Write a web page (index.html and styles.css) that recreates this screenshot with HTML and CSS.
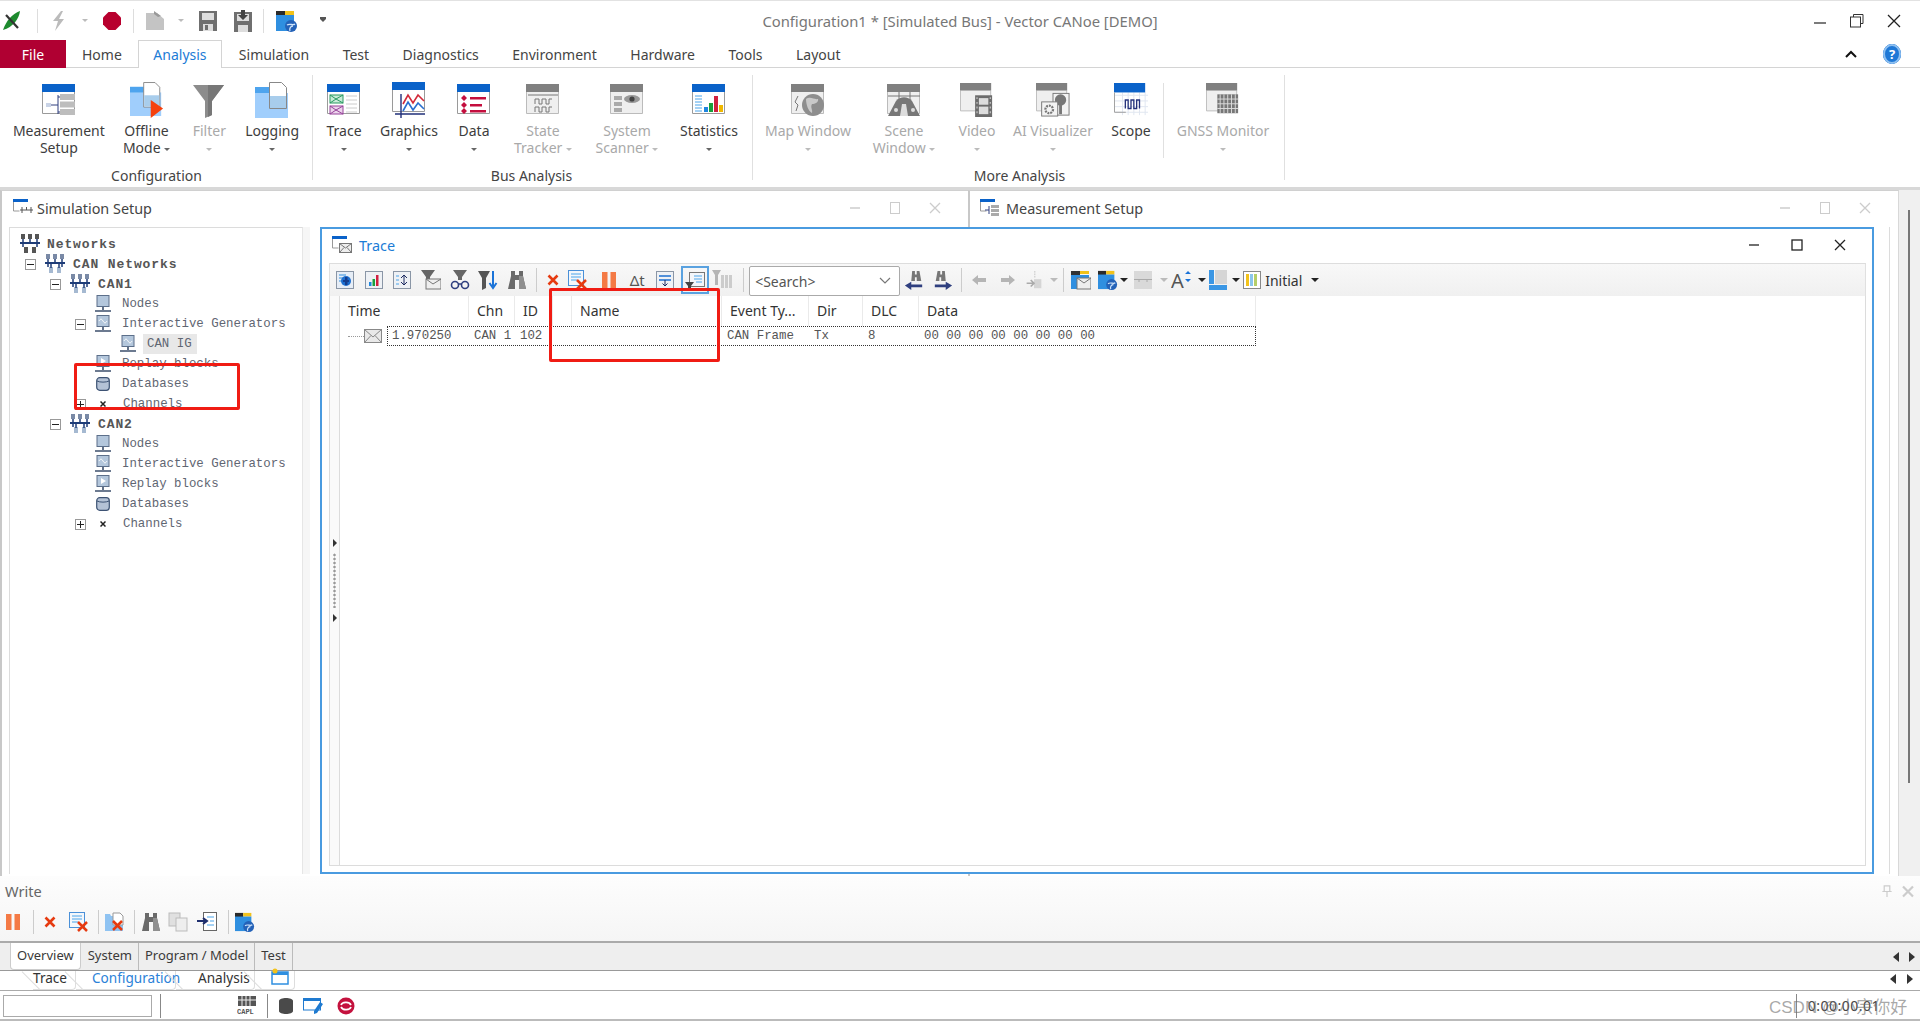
FILE: index.html
```html
<!DOCTYPE html>
<html lang="en">
<head>
<meta charset="utf-8">
<title>Vector CANoe</title>
<link rel="stylesheet" href="styles.css">
</head>
<body>
<svg class="sprite" xmlns="http://www.w3.org/2000/svg">
  <defs>
    <symbol id="r-frame-b" viewBox="0 0 34 32"><path d="M.5 8v21.5h32V8" fill="#fff" stroke="#9a9a9a"/><rect width="33" height="8" fill="#0a62c9"/></symbol>
    <symbol id="r-frame-g" viewBox="0 0 34 32"><path d="M.5 8v21.5h32V8" fill="#efefef" stroke="#bbb"/><rect width="33" height="8" fill="#808080"/></symbol>
    <symbol id="r-msetup" viewBox="0 0 34 32"><use href="#r-frame-b" width="34" height="32"/><path d="M4 21h12M16 11v19M16 13h3M16 28h3" stroke="#2f3f7f" fill="none"/><rect x="18" y="10" width="15" height="6" fill="#bdbdbd"/><rect x="18" y="17.500" width="15" height="6" fill="#bdbdbd"/><rect x="18" y="25" width="15" height="6" fill="#bdbdbd"/><rect x="4" y="19" width="5" height="4" fill="#c9d3e6"/></symbol>
    <symbol id="r-folder" viewBox="0 0 34 36"><rect y="5" width="30" height="10" fill="#4ea4ee"/><rect y="11" width="33" height="25" fill="#a0cefc"/><path d="M14.500 .5h12l5 5v21h-17z" fill="#fff" stroke="#888"/><rect x="15" y="14" width="16" height="12" fill="#a8cdec"/></symbol>
    <symbol id="r-offline" viewBox="0 0 36 38"><use href="#r-folder" width="34" height="36"/><path d="M22 19l13 9-13 10z" fill="#f5410e"/></symbol>
    <symbol id="r-filter" viewBox="0 0 34 36"><path d="M1 3h31L20 19v14l-7 3V19z" fill="#8c8c8c"/><path d="M16 3h16L20 19v14l-4 2z" fill="#777"/></symbol>
    <symbol id="r-trace" viewBox="0 0 34 32"><use href="#r-frame-b" width="34" height="32"/><rect x="3" y="11" width="13" height="8" fill="#c8ecd8" stroke="#2a9a62"/><path d="M3 11l6 4 7-4M3 19l6-4 7 4" stroke="#2a9a62" fill="none"/><rect x="3" y="22" width="13" height="8" fill="#ecd4ec" stroke="#96429a"/><path d="M3 22l6 4 7-4M3 30l6-4 7 4" stroke="#96429a" fill="none"/><path d="M19 12h11M19 16h11M19 20h11M19 24h11M19 28h11" stroke="#ccc"/></symbol>
    <symbol id="r-graphics" viewBox="0 0 34 36"><use href="#r-frame-b" width="34" height="32"/><path d="M9 12v24M3 32h30" stroke="#22307a" stroke-width="1.400" fill="none"/><path d="M11 22l5-9 5 8 5-8 6 6" stroke="#d22a3a" stroke-width="1.600" fill="none"/><path d="M11 29l5-9 5 8 5-7 6 6" stroke="#2a6fd0" stroke-width="1.600" fill="none"/></symbol>
    <symbol id="r-data" viewBox="0 0 34 32"><use href="#r-frame-b" width="34" height="32"/><path d="M7 11l3 3-3 3-3-3zM7 18l3 3-3 3-3-3zM7 24l3 3-3 3-3-3z" fill="#c40e3e"/><path d="M13 13h16v2.600H13zM13 20h12v2.600H13zM13 26h16v2.600H13z" fill="#c40e3e"/></symbol>
    <symbol id="r-state" viewBox="0 0 34 32"><use href="#r-frame-g" width="34" height="32"/><path d="M2 11h30" stroke="#777"/><path d="M9 20v-5h4v5h3v-5h4v5h3v-5h3M9 28v-5h4v5h3v-5h4v5h3v-5h3" stroke="#777" fill="none"/></symbol>
    <symbol id="r-scanner" viewBox="0 0 34 32"><use href="#r-frame-g" width="34" height="32"/><rect x="4" y="12" width="8" height="4" fill="#aaa"/><rect x="4" y="18" width="8" height="4" fill="#aaa"/><rect x="4" y="24" width="8" height="4" fill="#aaa"/><ellipse cx="22" cy="15" rx="8" ry="4" fill="#999"/><circle cx="22" cy="15" r="2.600" fill="#444"/></symbol>
    <symbol id="r-stats" viewBox="0 0 34 32"><use href="#r-frame-b" width="34" height="32"/><path d="M3 12h7M3 15h7M3 18h7M3 21h7M3 24h7M3 27h7" stroke="#4aa4ea"/><rect x="12" y="23" width="4" height="5" fill="#1e86e0"/><rect x="17" y="19" width="4" height="9" fill="#18a03c"/><rect x="22" y="12" width="4" height="16" fill="#d02040"/><rect x="27" y="21" width="4" height="7" fill="#f0b800"/></symbol>
    <symbol id="r-map" viewBox="0 0 34 32"><use href="#r-frame-g" width="34" height="32"/><circle cx="22" cy="21" r="11" fill="#8e8e8e"/><path d="M15 15c5-3 8 1 12 0 1 3-3 5-6 5-2 3 1 6 0 9-4-2-6-9-6-14z" fill="#c9c9c9"/><path d="M7 12l-3 6 3 3-2 6" stroke="#777" fill="none"/></symbol>
    <symbol id="r-scene" viewBox="0 0 34 32"><use href="#r-frame-g" width="34" height="32"/><path d="M1 12h32M12 8v10M23 8v10" stroke="#777"/><path d="M1 32l8-15c4-5 12-5 16 0l8 15z" fill="#777"/><path d="M13 32l2-12h4l2 12z" fill="#ddd"/><circle cx="9" cy="26" r="2" fill="#ddd"/><circle cx="26" cy="26" r="2" fill="#ddd"/></symbol>
    <symbol id="r-video" viewBox="0 0 36 36"><use href="#r-frame-g" width="34" height="32"/><rect x="16" y="13" width="18" height="23" fill="#6c6c6c"/><rect x="20" y="16" width="10" height="7" fill="#ddd"/><rect x="20" y="25" width="10" height="8" fill="#ddd"/><path d="M17.500 16h1M17.500 21h1M17.500 26h1M17.500 31h1M31.500 16h1M31.500 21h1M31.500 26h1M31.500 31h1" stroke="#ddd" stroke-width="2"/></symbol>
    <symbol id="r-ai" viewBox="0 0 36 36"><use href="#r-frame-g" width="34" height="32"/><rect x="18" y="11" width="17" height="23" fill="#f3f3f3" stroke="#777"/><circle cx="26" cy="18" r="6" fill="#777"/><rect x="24.500" y="20" width="3" height="13" fill="#777"/><rect x="6" y="20" width="17" height="15" fill="#f3f3f3" stroke="#777"/><circle cx="14" cy="28" r="4" fill="none" stroke="#777" stroke-width="2.400" stroke-dasharray="2 1"/></symbol>
    <symbol id="r-scope" viewBox="0 0 36 36"><path d="M9 10v24M15 10v24M21 10v24M27 10v24M33 10v24M1 13h36M1 19h36M1 25h36M1 31h36" stroke="#dfe5f0" fill="none"/><rect width="33" height="10" fill="#0a62c9"/><path d="M.5 10v21h12" stroke="#9a9a9a" fill="none"/><path d="M12 27v-9h3v9h3v-9h3v9h3v-9h3v9" stroke="#26337c" stroke-width="1.400" fill="none"/></symbol>
    <symbol id="r-gnss" viewBox="0 0 36 36"><use href="#r-frame-g" width="34" height="32"/><rect x="12" y="12" width="22" height="20" fill="#777"/><path d="M15 12v20M19 12v20M23 12v20M27 12v20M31 12v20M12 17h22M12 22h22M12 27h22" stroke="#ddd"/></symbol>

    <symbol id="q-logo" viewBox="0 0 20 22"><path d="M1 20C4 11 10 4 18 1c-1 8-7 16-17 19z" fill="#1d8a2e"/><path d="M4 5l12 13" stroke="#333" stroke-width="2.200"/></symbol>
    <symbol id="q-bolt" viewBox="0 0 16 22"><path d="M10 1L2 11h5L4 21l9-12H8l4-8z" fill="#bbb"/></symbol>
    <symbol id="q-rec" viewBox="0 0 18 18"><path d="M5.500 0h7L18 5.500v7L12.500 18h-7L0 12.500v-7z" fill="#b8002e"/></symbol>
    <symbol id="q-doc" viewBox="0 0 20 20"><path d="M1 2h11l7 6v11H1z" fill="#c4c4c4"/><path d="M9 0l7 5-3 1-4-3z" fill="#999"/></symbol>
    <symbol id="q-save" viewBox="0 0 18 20"><path d="M0 0h18v20H0z" fill="#6f6f6f"/><rect x="3" y="2" width="12" height="7" fill="#ddd"/><rect x="4" y="13" width="10" height="7" fill="#ddd"/><rect x="6" y="14" width="3" height="5" fill="#6f6f6f"/></symbol>
    <symbol id="q-saveas" viewBox="0 0 18 22"><path d="M0 2h18v20H0z" fill="#6f6f6f"/><rect x="3" y="4" width="12" height="7" fill="#ddd"/><rect x="4" y="15" width="10" height="7" fill="#ddd"/><path d="M7 0h4v5h3l-5 5-5-5h3z" fill="#444"/></symbol>
    <symbol id="q-fglobe" viewBox="0 0 22 22"><rect width="9" height="5" y="1" fill="#2a2a2a"/><rect x="9" y="1" width="9" height="4" fill="#f2c21a"/><rect y="5" width="18" height="16" fill="#2f8fe0"/><circle cx="15" cy="16" r="6" fill="#2462b8"/><path d="M11 15c3-2 6 1 8-1M14 21c-1-3 1-5 3-5" stroke="#cfe4fa" fill="none" stroke-width="1.300"/></symbol>

    <symbol id="t-net" viewBox="0 0 20 20"><rect x="1" y="0" width="4" height="5" fill="#7a8aa6"/><rect x="8" y="0" width="4" height="5" fill="#7a8aa6"/><rect x="15" y="0" width="4" height="5" fill="#7a8aa6"/><rect x="4" y="13" width="4" height="6" fill="#a5b9d1"/><rect x="12" y="13" width="4" height="6" fill="#a5b9d1"/><path d="M0 9h20" stroke="#1f3d78" stroke-width="2"/><path d="M3 5v8M10 5v4M17 5v8M6 9v5M14 9v5" stroke="#1f3d78" stroke-width="1.500"/></symbol>
    <symbol id="t-net0" viewBox="0 0 20 20"><rect x="1" y="0" width="4" height="5" fill="#555"/><rect x="8" y="0" width="4" height="5" fill="#555"/><rect x="15" y="0" width="4" height="5" fill="#555"/><rect x="4" y="13" width="4" height="6" fill="#555"/><rect x="12" y="13" width="4" height="6" fill="#555"/><path d="M0 9h20" stroke="#1f3d78" stroke-width="2"/><path d="M3 5v8M10 5v4M17 5v8" stroke="#1f3d78" stroke-width="1.500"/></symbol>
    <symbol id="t-node" viewBox="0 0 16 18"><rect x="2" y=".5" width="12" height="11" fill="#b4c7dc" stroke="#5c6f8a"/><path d="M8 12v3M0 16h16" stroke="#3c4f6c" stroke-width="1.600"/></symbol>
    <symbol id="t-ig" viewBox="0 0 16 18"><use href="#t-node" width="16" height="18"/><path d="M4 6c1.500-2.500 2.500-2.500 4 0s2.500 2.500 4 0" stroke="#fff" fill="none"/></symbol>
    <symbol id="t-rep" viewBox="0 0 16 18"><use href="#t-node" width="16" height="18"/><path d="M6 3l5 3-5 3z" fill="#fff"/></symbol>
    <symbol id="t-db" viewBox="0 0 14 14"><rect x=".7" y=".7" width="12.600" height="12.600" rx="3" fill="#b4c2d6" stroke="#3d5374" stroke-width="1.200"/><path d="M1 4c3 1.500 9 1.500 12 0" stroke="#3d5374" fill="none"/></symbol>
    <symbol id="t-ch" viewBox="0 0 6 6"><path d="M.5.500l5 5M5.500.500l-5 5" stroke="#222" stroke-width="1.500"/></symbol>
    <symbol id="t-win" viewBox="0 0 20 18"><path d="M.5 3v9h6" fill="none" stroke="#999"/><rect width="15" height="3" fill="#0a62c9"/></symbol>
    <symbol id="ph-sim" viewBox="0 0 20 18"><use href="#t-win" width="20" height="18"/><path d="M7 11h13M9 8v6M13.500 8v3M18 8v6" stroke="#555"/></symbol>
    <symbol id="ph-meas" viewBox="0 0 20 18"><use href="#t-win" width="20" height="18"/><path d="M5 11h4M9 7v8" stroke="#2f3f7f"/><rect x="11" y="6" width="8" height="3" fill="#aaa"/><rect x="11" y="10" width="8" height="3" fill="#aaa"/><rect x="11" y="14" width="8" height="3" fill="#aaa"/></symbol>
    <symbol id="ph-trace" viewBox="0 0 20 18"><use href="#t-win" width="20" height="18"/><rect x="7.500" y="7.500" width="12" height="9" fill="#eee" stroke="#777"/><path d="M7.500 7.500l6 4.500 6-4.500M7.500 16.500l4.500-5M19.500 16.500l-4.500-5" stroke="#777" fill="none"/></symbol>

    <symbol id="b-blue" viewBox="0 0 18 18"><rect x=".5" y=".5" width="17" height="17" fill="#e6edf6" stroke="#8a96a6"/><path d="M3 4h7M3 7h7M3 10h6" stroke="#2f8fe0"/><circle cx="10" cy="10" r="5" fill="#1d6fd0"/><path d="M9 6h2.500v8H9zM7 9h6v2H7z" fill="#153d8c"/></symbol>
    <symbol id="b-chart" viewBox="0 0 18 18"><rect x=".5" y=".5" width="17" height="17" fill="#eef1f5" stroke="#8a96a6"/><rect x="4" y="11" width="2.500" height="4" fill="#1e86e0"/><rect x="7.500" y="8" width="2.500" height="7" fill="#18a03c"/><rect x="11" y="4" width="2.500" height="11" fill="#d02040"/></symbol>
    <symbol id="b-scroll" viewBox="0 0 18 18"><rect x=".5" y=".5" width="17" height="17" fill="#eef1f5" stroke="#8a96a6"/><path d="M11 4v10M8 7l3-3 3 3M8 11l3 3 3-3" stroke="#1c2a60" fill="none"/><path d="M3 5h3M3 9h3M3 13h3" stroke="#4aa4ea"/></symbol>
    <symbol id="b-fenv" viewBox="0 0 20 20"><path d="M0 0h14L9 7v5H5V7z" fill="#666"/><rect x="5" y="9" width="15" height="10" fill="#eee" stroke="#777"/><path d="M5 9l7 5 8-5" stroke="#777" fill="none"/></symbol>
    <symbol id="b-fglass" viewBox="0 0 20 20"><path d="M3 0h14l-5 7v3H8V7z" fill="#666"/><circle cx="5" cy="15" r="3.500" fill="none" stroke="#2f3f7f" stroke-width="1.600"/><circle cx="15" cy="15" r="3.500" fill="none" stroke="#2f3f7f" stroke-width="1.600"/><path d="M8 14h4" stroke="#2f3f7f" stroke-width="1.500"/></symbol>
    <symbol id="b-fdown" viewBox="0 0 20 20"><path d="M0 1h12L8 8v10l-4 2V8z" fill="#555"/><path d="M15 1v15M11.500 13l3.500 5 3.500-5" stroke="#1a73d8" stroke-width="2" fill="none"/></symbol>
    <symbol id="b-binoc" viewBox="0 0 20 20"><path d="M4 1h4v4h4V1h4v5l3 13h-7V10H8v9H1L4 6z" fill="#6a6a6a"/><path d="M12 6h4l3 13h-7z" fill="#8f8f8f"/></symbol>
    <symbol id="b-x" viewBox="0 0 12 12"><path d="M1.500 1.500l9 9M10.500 1.500l-9 9" stroke="#e63a10" stroke-width="2.600"/></symbol>
    <symbol id="b-clear" viewBox="0 0 20 20"><rect x=".5" y=".5" width="15" height="15" fill="#f4f7fb" stroke="#4a90d8"/><path d="M3 4h10M3 7h10M3 10h6" stroke="#4aa4ea"/><path d="M9 10l9 9M18 10l-9 9" stroke="#e63a10" stroke-width="2.500"/></symbol>
    <symbol id="b-pause" viewBox="0 0 14 16"><rect width="5.500" height="16" fill="#f47a45"/><rect x="8.500" width="5.500" height="16" fill="#f47a45"/></symbol>
    <symbol id="b-sep" viewBox="0 0 18 18"><rect x=".5" y=".5" width="17" height="17" fill="#eef1f5" stroke="#8a96a6"/><path d="M3 5h12M3 9h12" stroke="#1d6fd0" stroke-width="1.500"/><path d="M9 9v6M6.500 12.500L9 15l2.500-2.500" stroke="#1c2a60" fill="none"/></symbol>
    <symbol id="b-hl" viewBox="0 0 20 20"><rect x="4.500" y="2.500" width="15" height="14" fill="#f3f6fa" stroke="#777"/><path d="M9 6h8M9 9h8M11 12h6" stroke="#4aa4ea"/><path d="M0 12h9l-3 4v4H3v-4z" fill="#444"/></symbol>
    <symbol id="b-bars" viewBox="0 0 20 20"><path d="M0 0h9L6 5v10H3V5z" fill="#b5b5b5"/><rect x="9" y="5" width="3" height="13" fill="#ccc"/><rect x="13" y="5" width="3" height="13" fill="#ccc"/><rect x="17" y="5" width="3" height="13" fill="#ccc"/></symbol>
    <symbol id="b-fleft" viewBox="0 0 20 22"><path d="M8 1h3v4h2V1h3l2 11h-5V8h-2v4H7z" fill="#777"/><path d="M0 17l7-4v3h12v3H7v3z" fill="#2f3f7f"/></symbol>
    <symbol id="b-fright" viewBox="0 0 20 22"><path d="M4 1h3v4h2V1h3l1 11H8V8H6v4H2z" fill="#777"/><path d="M20 17l-7-4v3H1v3h12v3z" fill="#2f3f7f"/></symbol>
    <symbol id="b-aleft" viewBox="0 0 14 12"><path d="M0 6l6-5v3h8v4H6v3z" fill="#b5b5b5"/></symbol>
    <symbol id="b-aright" viewBox="0 0 14 12"><path d="M14 6L8 1v3H0v4h8v3z" fill="#b5b5b5"/></symbol>
    <symbol id="b-jump" viewBox="0 0 18 22"><path d="M10 0v8" stroke="#bbb" stroke-dasharray="2 1"/><rect x="9" y="10" width="9" height="11" fill="#d5d5d5"/><path d="M0 15h8M5 11l4 4-4 4" stroke="#aaa" stroke-width="2" fill="none"/></symbol>
    <symbol id="b-fenv2" viewBox="0 0 20 20"><rect y="1" width="9" height="4" fill="#333"/><rect x="9" y="1" width="9" height="3" fill="#f2c21a"/><rect y="5" width="18" height="14" fill="#2f8fe0"/><rect x="6" y="8" width="14" height="11" fill="#eee" stroke="#777"/><path d="M6 8l7 5 7-5" stroke="#777" fill="none"/></symbol>
    <symbol id="b-lines" viewBox="0 0 18 18"><rect width="18" height="8" fill="#d9d9d9"/><rect y="9" width="18" height="9" fill="#d9d9d9"/><path d="M0 8.500h18M5 8v3M13 8v3" stroke="#aaa"/></symbol>
    <symbol id="b-font" viewBox="0 0 22 20"><text x="0" y="18" class="svgfont">A</text><path d="M17 1l3 3h-6zM17 12l3-3h-6z" fill="#1a73d8"/></symbol>
    <symbol id="b-layout" viewBox="0 0 18 20"><rect width="5" height="14" fill="#3a96e4"/><rect x="6" width="12" height="14" fill="#d5d5d5"/><rect y="15" width="18" height="5" fill="#3a96e4"/></symbol>
    <symbol id="b-cols" viewBox="0 0 18 18"><rect x=".5" y=".5" width="17" height="17" fill="#fff" stroke="#888"/><rect x="3" y="3" width="3" height="12" fill="#f2c21a"/><rect x="7" y="3" width="3" height="12" fill="#8bc6ec"/><rect x="11" y="3" width="3" height="12" fill="#b6cf6a"/></symbol>
    <symbol id="b-fx" viewBox="0 0 20 20"><path d="M0 2h5l1 2h6V1l6 4v14H0z" fill="#8fc3f2"/><path d="M8 1h7l3 3v9H8z" fill="#fff" stroke="#999"/><path d="M8 9l9 9M17 9l-9 9" stroke="#e63a10" stroke-width="2.500"/></symbol>
    <symbol id="b-copy" viewBox="0 0 20 20"><rect x="1" y="1" width="11" height="13" fill="#e0e0e0" stroke="#bbb"/><rect x="8" y="6" width="11" height="13" fill="#eee" stroke="#bbb"/></symbol>
    <symbol id="b-import" viewBox="0 0 20 20"><rect x="6.500" y=".5" width="13" height="18" fill="#fff" stroke="#666"/><path d="M10 5h7M13 9h4M10 13h7" stroke="#4aa4ea"/><path d="M0 9h9M6 6l4 3-4 3" stroke="#1f2f6f" stroke-width="2" fill="none"/></symbol>
    <symbol id="b-capl" viewBox="0 0 20 20"><rect x="1" y="0" width="18" height="10" fill="#555"/><path d="M5 0v10M9 0v10M13 0v10M1 4h18" stroke="#eee"/><text x="0" y="18" class="svgcapl">CAPL</text></symbol>
    <symbol id="b-cyl" viewBox="0 0 14 16"><path d="M0 3c0-4 14-4 14 0v10c0 4-14 4-14 0z" fill="#4a4a4a"/></symbol>
    <symbol id="b-edit" viewBox="0 0 20 16"><rect x=".5" y="1" width="17" height="11" fill="#fff" stroke="#1f7ad0"/><rect width="18" height="3" fill="#1f7ad0"/><path d="M11 13l6-9 3 2-6 9-3 1z" fill="#1f7ad0"/></symbol>
    <symbol id="b-sync" viewBox="0 0 18 18"><circle cx="9" cy="9" r="8.500" fill="#c4123e"/><path d="M4 8c1-3 8-4 10 0M14 10c-1 3-8 4-10 0" stroke="#fff" stroke-width="1.700" fill="none"/></symbol>
  </defs>
</svg>

<header class="titlebar">
  <div class="qat">
    <svg class="q q-l"><use href="#q-logo"/></svg><i class="q-sep s1"></i>
    <svg class="q q-b"><use href="#q-bolt"/></svg><b class="q-drop d1"></b>
    <svg class="q q-r"><use href="#q-rec"/></svg><i class="q-sep s2"></i>
    <svg class="q q-d"><use href="#q-doc"/></svg><b class="q-drop d2"></b>
    <svg class="q q-s"><use href="#q-save"/></svg>
    <svg class="q q-a"><use href="#q-saveas"/></svg><i class="q-sep s3"></i>
    <svg class="q q-f"><use href="#q-fglobe"/></svg><b class="q-drop d3"></b>
  </div>
  <div class="app-title">Configuration1 * [Simulated Bus] - Vector CANoe [DEMO]</div>
  <div class="win-ctrl">
    <svg class="ctl" viewBox="0 0 14 14"><path d="M1 9h12" stroke="#333" stroke-width="1.300"/></svg>
    <svg class="ctl" viewBox="0 0 14 14"><path d="M3.500 3V.5h9.500v9h-2.500" fill="none" stroke="#333"/><rect x=".5" y="3" width="10" height="10" fill="#fff" stroke="#333"/></svg>
    <svg class="ctl" viewBox="0 0 14 14"><path d="M1 1l12 12M13 1L1 13" stroke="#222" stroke-width="1.300"/></svg>
  </div>
</header>

<nav class="tabs">
  <div class="tab file">File</div>
  <div class="tab home">Home</div>
  <div class="tab active">Analysis</div>
  <div class="tab">Simulation</div>
  <div class="tab">Test</div>
  <div class="tab">Diagnostics</div>
  <div class="tab">Environment</div>
  <div class="tab">Hardware</div>
  <div class="tab">Tools</div>
  <div class="tab">Layout</div>
  <div class="tab-right">
    <svg class="caret-up" viewBox="0 0 12 8"><path d="M1 7l5-5 5 5" fill="none" stroke="#111" stroke-width="2"/></svg>
    <div class="help">?</div>
  </div>
</nav>

<section class="ribbon">
  <div class="rgroup g1">
    <div class="rbtns">
      <div class="rb w106"><svg class="ri"><use href="#r-msetup"/></svg><span>Measurement<br>Setup</span></div>
      <div class="rb w70"><svg class="ri"><use href="#r-offline"/></svg><span>Offline<br>Mode <b class="dn"></b></span></div>
      <div class="rb w56 off"><svg class="ri"><use href="#r-filter"/></svg><span>Filter<br><b class="dn"></b></span></div>
      <div class="rb w70"><svg class="ri"><use href="#r-folder"/></svg><span>Logging<br><b class="dn"></b></span></div>
    </div>
    <div class="rlabel">Configuration</div>
  </div>
  <div class="rgroup g2">
    <div class="rbtns">
      <div class="rb w58"><svg class="ri"><use href="#r-trace"/></svg><span>Trace<br><b class="dn"></b></span></div>
      <div class="rb w72"><svg class="ri"><use href="#r-graphics"/></svg><span>Graphics<br><b class="dn"></b></span></div>
      <div class="rb w58"><svg class="ri"><use href="#r-data"/></svg><span>Data<br><b class="dn"></b></span></div>
      <div class="rb w80 off"><svg class="ri"><use href="#r-state"/></svg><span>State<br>Tracker <b class="dn"></b></span></div>
      <div class="rb w88 off"><svg class="ri"><use href="#r-scanner"/></svg><span>System<br>Scanner <b class="dn"></b></span></div>
      <div class="rb w76"><svg class="ri"><use href="#r-stats"/></svg><span>Statistics<br><b class="dn"></b></span></div>
    </div>
    <div class="rlabel">Bus Analysis</div>
  </div>
  <div class="rgroup g3">
    <div class="rbtns">
      <div class="rb w106 off"><svg class="ri"><use href="#r-map"/></svg><span>Map Window<br><b class="dn"></b></span></div>
      <div class="rb w86 off"><svg class="ri"><use href="#r-scene"/></svg><span>Scene<br>Window <b class="dn"></b></span></div>
      <div class="rb w60 off"><svg class="ri"><use href="#r-video"/></svg><span>Video<br><b class="dn"></b></span></div>
      <div class="rb w92 off"><svg class="ri"><use href="#r-ai"/></svg><span>AI Visualizer<br><b class="dn"></b></span></div>
      <div class="rb w64"><svg class="ri"><use href="#r-scope"/></svg><span>Scope</span></div>
      <i class="rsep"></i>
      <div class="rb w118 off"><svg class="ri"><use href="#r-gnss"/></svg><span>GNSS Monitor<br><b class="dn"></b></span></div>
    </div>
    <div class="rlabel">More Analysis</div>
  </div>
</section>

<main class="workspace">
  <section class="panel sim">
    <div class="panel-head">
      <svg class="ph-i"><use href="#ph-sim"/></svg><span class="ph-t">Simulation Setup</span>
      <div class="ph-ctl">
        <svg class="pc" viewBox="0 0 14 14"><path d="M2 7h10" stroke="#ccc" stroke-width="1.500"/></svg>
        <svg class="pc" viewBox="0 0 14 14"><rect x="2.500" y="1.500" width="9" height="11" fill="none" stroke="#ccc"/></svg>
        <svg class="pc" viewBox="0 0 14 14"><path d="M2 2l10 10M12 2L2 12" stroke="#ccc" stroke-width="1.300"/></svg>
      </div>
    </div>
    <div class="sim-body">
      <div class="tree">
        <div class="node lvl0 hd"><svg class="ic20"><use href="#t-net0"/></svg>Networks</div>
        <div class="node lvl1 hd"><i class="exp minus"></i><svg class="ic20"><use href="#t-net"/></svg>CAN Networks</div>
        <div class="node lvl2 hd"><i class="exp minus"></i><svg class="ic20"><use href="#t-net"/></svg>CAN1</div>
        <div class="node lvl3"><i class="exp none"></i><svg class="ic16"><use href="#t-node"/></svg>Nodes</div>
        <div class="node lvl3"><i class="exp minus"></i><svg class="ic16"><use href="#t-ig"/></svg>Interactive Generators</div>
        <div class="node lvl4"><svg class="ic16"><use href="#t-ig"/></svg><span class="sel">CAN IG</span></div>
        <div class="node lvl3"><i class="exp none"></i><svg class="ic16"><use href="#t-rep"/></svg>Replay blocks</div>
        <div class="node lvl3"><i class="exp none"></i><svg class="ic14"><use href="#t-db"/></svg>Databases</div>
        <div class="node lvl3"><i class="exp plus"></i><svg class="ic6"><use href="#t-ch"/></svg>Channels</div>
        <div class="node lvl2 hd"><i class="exp minus"></i><svg class="ic20"><use href="#t-net"/></svg>CAN2</div>
        <div class="node lvl3"><i class="exp none"></i><svg class="ic16"><use href="#t-node"/></svg>Nodes</div>
        <div class="node lvl3"><i class="exp none"></i><svg class="ic16"><use href="#t-ig"/></svg>Interactive Generators</div>
        <div class="node lvl3"><i class="exp none"></i><svg class="ic16"><use href="#t-rep"/></svg>Replay blocks</div>
        <div class="node lvl3"><i class="exp none"></i><svg class="ic14"><use href="#t-db"/></svg>Databases</div>
        <div class="node lvl3"><i class="exp plus"></i><svg class="ic6"><use href="#t-ch"/></svg>Channels</div>
      </div>
    </div>
  </section>
  <section class="panel meas">
    <div class="panel-head">
      <svg class="ph-i"><use href="#ph-meas"/></svg><span class="ph-t">Measurement Setup</span>
      <div class="ph-ctl">
        <svg class="pc" viewBox="0 0 14 14"><path d="M2 7h10" stroke="#ccc" stroke-width="1.500"/></svg>
        <svg class="pc" viewBox="0 0 14 14"><rect x="2.500" y="1.500" width="9" height="11" fill="none" stroke="#ccc"/></svg>
        <svg class="pc" viewBox="0 0 14 14"><path d="M2 2l10 10M12 2L2 12" stroke="#ccc" stroke-width="1.300"/></svg>
      </div>
    </div>
    <div class="meas-body"></div>
  </section>
  <aside class="vscroll"><i class="vthumb"></i></aside>

  <section class="trace">
    <div class="trace-head">
      <svg class="th-i"><use href="#ph-trace"/></svg><span class="th-t">Trace</span>
      <div class="th-ctl">
        <svg class="tc" viewBox="0 0 14 14"><path d="M2 7h10" stroke="#222" stroke-width="1.300"/></svg>
        <svg class="tc" viewBox="0 0 14 14"><rect x="2" y="2" width="10" height="10" fill="none" stroke="#222" stroke-width="1.300"/></svg>
        <svg class="tc" viewBox="0 0 14 14"><path d="M2 2l10 10M12 2L2 12" stroke="#222" stroke-width="1.300"/></svg>
      </div>
    </div>
    <div class="trace-toolbar">
      <span class="ti w29"><svg class="i18"><use href="#b-blue"/></svg></span>
      <span class="ti w29"><svg class="i18"><use href="#b-chart"/></svg></span>
      <span class="ti w29"><svg class="i18"><use href="#b-scroll"/></svg></span>
      <span class="ti w29"><svg class="i20"><use href="#b-fenv"/></svg></span>
      <span class="ti w29"><svg class="i20"><use href="#b-fglass"/></svg></span>
      <span class="ti w29"><svg class="i20"><use href="#b-fdown"/></svg></span>
      <span class="ti w29"><svg class="i20"><use href="#b-binoc"/></svg></span>
      <i class="tsep m3"></i>
      <span class="ti w21"><svg class="i12"><use href="#b-x"/></svg></span>
      <span class="ti w30"><svg class="i20"><use href="#b-clear"/></svg></span>
      <span class="ti w32"><svg class="i16"><use href="#b-pause"/></svg></span>
      <span class="ti w24 dt">Δt</span>
      <span class="ti w32"><svg class="i18"><use href="#b-sep"/></svg></span>
      <span class="ti w28 hl"><svg class="i20"><use href="#b-hl"/></svg></span>
      <span class="ti w26"><svg class="i20"><use href="#b-bars"/></svg></span>
      <i class="tsep m6"></i>
      <div class="combo"><span>&lt;Search&gt;</span><svg class="chev" viewBox="0 0 12 8"><path d="M1 1l5 5 5-5" fill="none" stroke="#777" stroke-width="1.200"/></svg></div>
      <span class="ti w28"><svg class="i20"><use href="#b-fleft"/></svg></span>
      <span class="ti w30"><svg class="i20"><use href="#b-fright"/></svg></span>
      <i class="tsep m4"></i>
      <span class="ti w34"><svg class="i14"><use href="#b-aleft"/></svg></span>
      <span class="ti w24"><svg class="i14"><use href="#b-aright"/></svg></span>
      <span class="ti w28"><svg class="i18"><use href="#b-jump"/></svg></span><b class="ar gr"></b>
      <i class="tsep m5"></i>
      <span class="ti w34"><svg class="i20"><use href="#b-fenv2"/></svg></span>
      <span class="ti w20"><svg class="i20"><use href="#q-fglobe"/></svg></span><b class="ar"></b>
      <span class="ti w30"><svg class="i18"><use href="#b-lines"/></svg></span><b class="ar gr"></b>
      <span class="ti w28"><svg class="i22"><use href="#b-font"/></svg></span><b class="ar"></b>
      <span class="ti w24"><svg class="i20"><use href="#b-layout"/></svg></span><b class="ar"></b>
      <span class="ti w24"><svg class="i18"><use href="#b-cols"/></svg></span>
      <span class="initial">Initial</span><b class="ar"></b>
    </div>
    <div class="trace-body">
      <div class="splitter">
        <b class="tri"></b>
        <i class="dots"></i>
        <b class="tri"></b>
      </div>
      <div class="table">
        <div class="thead">
          <div>Time</div><div>Chn</div><div>ID</div><div></div><div>Name</div><div>Event Ty...</div><div>Dir</div><div>DLC</div><div>Data</div>
        </div>
        <div class="trow">
          <div class="rowhead"><i class="treeline"></i><svg class="env" viewBox="0 0 18 14"><rect x=".5" y=".5" width="17" height="13" fill="#e9e9e9" stroke="#888"/><path d="M.5.5L9 8l8.500-7.500M.5 13.500L7 6.500M17.500 13.500L11 6.500" stroke="#888" fill="none"/></svg></div>
          <div class="rowbox">
            <div class="c-time">1.970250</div><div>CAN 1</div><div>102</div><div></div><div></div><div>CAN Frame</div><div>Tx</div><div>8</div><div>00 00 00 00 00 00 00 00</div>
          </div>
        </div>
      </div>
    </div>
  </section>
</main>

<section class="write">
  <div class="write-head"><span>Write</span>
    <div class="write-ctl">
      <svg class="wc" viewBox="0 0 12 14"><path d="M3 1h6v6H3zM1 7h10M6 7v6" fill="none" stroke="#ccc" stroke-width="1.300"/></svg>
      <svg class="wc" viewBox="0 0 12 12"><path d="M1 1l10 10M11 1L1 11" stroke="#ccc" stroke-width="2.200"/></svg>
    </div>
  </div>
  <div class="write-toolbar">
    <span class="wi w26"><svg class="i16"><use href="#b-pause"/></svg></span><i class="wsep"></i>
    <span class="wi w24"><svg class="i12"><use href="#b-x"/></svg></span>
    <span class="wi w34"><svg class="i20"><use href="#b-clear"/></svg></span><i class="wsep tight"></i>
    <span class="wi w24"><svg class="i20"><use href="#b-fx"/></svg></span><i class="wsep"></i>
    <span class="wi w24"><svg class="i20"><use href="#b-binoc"/></svg></span>
    <span class="wi w30"><svg class="i20"><use href="#b-copy"/></svg></span>
    <span class="wi w28"><svg class="i20"><use href="#b-import"/></svg></span><i class="wsep"></i>
    <span class="wi w24"><svg class="i20"><use href="#q-fglobe"/></svg></span>
  </div>
</section>

<section class="out-tabs">
  <div class="ot active">Overview</div>
  <div class="ot">System</div>
  <div class="ot">Program / Model</div>
  <div class="ot">Test</div>
  <div class="nav-arrows"><b class="na l"></b><b class="na r"></b></div>
</section>

<section class="sheets">
  <div class="sheet s-tr">Trace</div>
  <div class="sheet s-cf">Configuration</div>
  <div class="sheet s-an">Analysis</div>
  <div class="sheet s-new"><svg class="newwin" viewBox="0 0 18 16"><rect x="1" y="3" width="16" height="12" fill="#fff" stroke="#2f8fe0" stroke-width="1.500"/><rect x="1" y="3" width="16" height="3" fill="#2f8fe0"/><circle cx="4" cy="2" r="2.500" fill="#f2c21a"/></svg></div>
  <div class="nav-arrows a2"><b class="na l"></b><b class="na r"></b></div>
</section>

<footer class="status">
  <div class="st-input"></div>
  <i class="st-sep a"></i>
  <svg class="st-capl"><use href="#b-capl"/></svg>
  <i class="st-sep b"></i>
  <svg class="st-i cyl"><use href="#b-cyl"/></svg>
  <svg class="st-i edit"><use href="#b-edit"/></svg>
  <svg class="st-i syn"><use href="#b-sync"/></svg>
  <div class="st-time"><i class="st-sep c"></i><span>0:00:00.01</span></div>
</footer>

<div class="mark m-tree"></div>
<div class="mark m-name"></div>
<div class="watermark">CSDN @小宗你好</div>
</body>
</html>
```

FILE: styles.css
```css
* { box-sizing: border-box; }
html, body { margin: 0; padding: 0; }
body {
  width: 1920px; height: 1021px; overflow: hidden; position: relative;
  display: flex; flex-direction: column; background: #fff;
  font: 14px "Noto Sans", "Open Sans", sans-serif; color: #333;
}
i, b { display: block; font-style: normal; }
svg { display: block; overflow: visible; flex: none; }
.sprite { position: absolute; width: 0; height: 0; }
.svgfont { font: 20px "Noto Sans", sans-serif; fill: #555; }
.svgcapl { font: bold 7px "Liberation Mono", monospace; fill: #555; }

/* title bar */
.titlebar { height: 40px; flex: none; border-top: 1px solid #e2e2e2; display: grid; grid-template-columns: 1fr auto 1fr; align-items: center; }
.qat { display: flex; align-items: center; padding-left: 2px; }
.q-sep { width: 1px; height: 24px; background: #ddd; }
.q-drop, .dn, .ar { width: 0; height: 0; border-left: 3px solid transparent; border-right: 3px solid transparent; border-top: 3px solid #888; }
.q-l { width: 20px; height: 22px; }
.s1 { margin-left: 15px; }
.q-b { width: 16px; height: 22px; margin-left: 13px; }
.d1 { border-top-color: #bbb; margin-left: 15px; }
.q-r { width: 18px; height: 18px; margin-left: 15px; }
.s2 { margin-left: 12px; }
.q-d { width: 20px; height: 20px; margin-left: 11px; }
.d2 { border-top-color: #bbb; margin-left: 13px; }
.q-s { width: 18px; height: 20px; margin-left: 15px; }
.q-a { width: 18px; height: 22px; margin-left: 17px; }
.s3 { margin-left: 11px; }
.q-f { width: 22px; height: 22px; margin-left: 12px; }
.d3 { border-top-color: #555; margin-left: 22px; box-shadow: 0 -2px 0 0 #555; }
.app-title { color: #777; font-size: 14.8px; }
.win-ctrl { display: flex; justify-content: flex-end; gap: 23px; padding-right: 19px; }
.ctl { width: 14px; height: 14px; }

/* tabs */
.tabs { height: 28px; flex: none; display: flex; border-bottom: 1px solid #d4d4d4; align-items: stretch; position: relative; }
.tab { padding: 0 15.75px; line-height: 27px; font-size: 14px; color: #444; height: 28px; border: 1px solid transparent; border-bottom: 0; }
.tab.home { padding: 0 15px; }
.tab.file { width: 66px; padding: 0; text-align: center; background: #b00032; color: #fff; }
.tab.active { color: #1c7cd6; background: #fff; border-color: #d4d4d4; height: 28px; padding: 0 14.5px; }
.tab-right { margin-left: auto; display: flex; align-items: center; gap: 26px; padding-right: 19px; }
.caret-up { width: 12px; height: 8px; }
.help { width: 18px; height: 20px; border-radius: 50%; background: #1f78d6; color: #fff; font: bold 13px/20px "Noto Sans", sans-serif; text-align: center; box-shadow: inset 0 0 0 2px #8fc0f0, inset 0 0 0 3px #1f78d6; }

/* ribbon */
.ribbon { height: 122px; flex: none; display: flex; border-bottom: 3px solid #d8d8d8; padding-top: 7px; padding-left: 6px; }
.rgroup { display: flex; flex-direction: column; border-right: 1px solid #e0e0e0; height: 105px; }
.g1 { width: 307px; padding-right: 5px; }
.g2 { width: 440px; padding-left: 2px; padding-right: 4px; }
.g3 { width: 532px; padding-left: 2px; }
.rbtns { display: flex; flex: 1; padding-top: 7px; }
.rb { display: flex; flex-direction: column; align-items: center; text-align: center; line-height: 17px; font-size: 14px; color: #3d3d3d; }
.rb.off { color: #a9a9a9; }
.ri { width: 34px; height: 36px; margin-bottom: 4px; }
.rb span { display: block; }
.rb .dn { display: inline-block; vertical-align: middle; border-top-color: #666; }
.rb.off .dn { border-top-color: #bbb; }
.rlabel { text-align: center; height: 18px; line-height: 28px; font-size: 14px; color: #444; }
.rsep { width: 1px; height: 75px; background: #e0e0e0; margin-top: 1px; }
.w106 { width: 106px; } .w70 { width: 70px; } .w56 { width: 56px; } .w58 { width: 58px; }
.w72 { width: 72px; } .w80 { width: 80px; } .w88 { width: 88px; } .w76 { width: 76px; }
.w86 { width: 86px; } .w60 { width: 60px; } .w92 { width: 92px; } .w64 { width: 64px; } .w118 { width: 118px; }
.w20 { width: 20px; } .w21 { width: 21px; } .w24 { width: 24px; } .w26 { width: 26px; } .w28 { width: 28px; }
.w29 { width: 28.6px; } .w30 { width: 30px; } .w32 { width: 32px; } .w34 { width: 34px; }

/* workspace */
.workspace { height: 686px; flex: none; display: flex; position: relative; background: #fff; }
.panel { display: flex; flex-direction: column; border-left: 1px solid #c8c8c8; border-top: 1px solid #d0d0d0; }
.sim { width: 968px; border-left-width: 2px; }
.meas { width: 931px; border-left: 2px solid #c8c8c8; border-right: 1px solid #d8d8d8; }
.panel-head { height: 36px; flex: none; display: flex; align-items: center; font-size: 14.4px; color: #444; padding: 0 0 2px 11px; }
.meas .panel-head { padding-left: 10px; }
.ph-i { width: 20px; height: 18px; margin-right: 4px; }
.meas .ph-i { margin-right: 6px; }
.ph-ctl { margin-left: auto; display: flex; gap: 26px; padding-right: 26px; }
.pc { width: 14px; height: 14px; }
.sim-body { flex: 1; display: flex; padding-left: 7px; padding-bottom: 2px; }
.tree { width: 294px; border: 1px solid #dcdcdc; border-bottom: 0; padding-top: 6px; border-right-color: #e6e6e6; box-shadow: 7px 0 0 #f6f6f6; font: 12.4px "Liberation Mono", monospace; color: #5f6672; }
.node { height: 20px; display: flex; align-items: center; white-space: nowrap; }
.hd { font-weight: bold; font-size: 13px; letter-spacing: .9px; color: #555; }
.lvl0 { padding-left: 10px; }
.lvl1 { padding-left: 15px; }
.lvl2 { padding-left: 40px; }
.lvl3 { padding-left: 65px; }
.lvl4 { padding-left: 110px; }
.ic20 { width: 20px; height: 20px; margin-right: 8px; }
.lvl0 .ic20 { margin-right: 7px; }
.exp { width: 11px; height: 11px; margin-right: 9px; border: 1px solid #999; position: relative; flex: none; }
.exp.none { border-color: transparent; }
.exp.minus::before, .exp.plus::before { content: ""; position: absolute; left: 1px; right: 1px; top: 4px; height: 1px; background: #222; }
.exp.plus::after { content: ""; position: absolute; top: 1px; bottom: 1px; left: 4px; width: 1px; background: #222; }
.ic16 { width: 16px; height: 18px; margin-right: 11px; }
.ic14 { width: 14px; height: 14px; margin: 0 12px 0 1px; }
.ic6 { width: 6px; height: 6px; margin: 0 17px 0 5px; }
.lvl4 .ic16 { margin-right: 7px; }
.sel { background: #e8e8e8; height: 20px; line-height: 20px; padding: 0 5px 0 4px; }
.meas-body { flex: 1; margin: 0 8px 2px 0; border-right: 1px solid #dcdcdc; }
.vscroll { flex: 1; background: #f0f0f0; padding: 20px 0 0 9px; }
.vthumb { width: 2px; height: 573px; background: #777; }

/* Trace MDI window */
.trace { position: absolute; left: 320px; top: 37px; width: 1554px; height: 647px; border: 2px solid #4a9be0; background: #fff; display: flex; flex-direction: column; }
.trace-head { height: 34px; flex: none; display: flex; align-items: center; padding: 0 0 2px 10px; }
.th-i { width: 20px; height: 18px; margin-right: 7px; }
.th-t { color: #1c7cd6; font-size: 14.4px; }
.th-ctl { margin-left: auto; display: flex; gap: 29px; padding-right: 25px; }
.tc { width: 14px; height: 14px; }
.trace-toolbar { height: 33px; flex: none; margin: 0 6px 0 7px; padding-left: 1px; display: flex; align-items: center; background: linear-gradient(#f8f8f8, #f0f0f0); border-top: 1px solid #ddd; border-right: 1px solid #e0e0e0; border-left: 1px solid #e0e0e0; }
.ti { display: flex; align-items: center; justify-content: center; height: 30px; flex: none; }
.i12 { width: 12px; height: 12px; } .i14 { width: 14px; height: 12px; } .i16 { width: 14px; height: 16px; }
.i18 { width: 18px; height: 18px; } .i20 { width: 20px; height: 20px; } .i22 { width: 22px; height: 20px; }
.tsep { width: 1px; height: 24px; background: #ccc; flex: none; }
.m3 { margin: 0 5px; } .m6 { margin: 0 5px 0 8px; } .m4 { margin-left: 3px; } .m5 { margin-left: 5px; }
.hl { border: 2px solid #5aa2e0; height: 28px; }
.dt { font-size: 15px; color: #555; }
.combo { width: 151px; height: 30px; align-self: flex-end; background: #fff; border: 1px solid #aaa; border-radius: 2px; display: flex; align-items: center; justify-content: space-between; padding: 0 8px 0 5px; font-size: 14px; color: #555; flex: none; }
.chev { width: 12px; height: 8px; }
.ar { border-top: 4px solid #222; border-left-width: 4px; border-right-width: 4px; margin-left: 2px; flex: none; }
.ar.gr { border-top-color: #bbb; }
.initial { font-size: 14px; color: #333; margin-left: 1px; margin-right: 7px; }
.trace-body { flex: 1; margin: 0 6px 6px 7px; display: flex; border: 1px solid #dcdcdc; border-top: 0; }
.splitter { width: 10px; flex: none; display: flex; flex-direction: column; align-items: center; justify-content: center; gap: 6px; background: #fafafa; border-right: 1px solid #dcdcdc; }
.tri { width: 0; height: 0; border-top: 4px solid transparent; border-bottom: 4px solid transparent; border-left: 4px solid #333; }
.dots { width: 3px; height: 55px; background-image: radial-gradient(#999 1px, transparent 1.2px); background-size: 3px 4px; }
.table { flex: 1; min-width: 0; }
.thead, .rowbox { display: grid; grid-template-columns: 129px 46px 38px 19px 150px 87px 54px 56px 337px; }
.thead { height: 30px; width: 916px; font-size: 14px; color: #333; line-height: 29px; }
.thead div { padding-left: 8px; border-right: 1px solid #eaeaea; white-space: nowrap; overflow: hidden; }
.trow { display: flex; height: 20px; position: relative; font: 12.4px/21px "Liberation Mono", monospace; color: #555; }
.rowhead { position: absolute; left: 8px; top: 0; display: flex; align-items: center; height: 20px; }
.treeline { width: 16px; border-top: 1px dotted #999; }
.env { width: 18px; height: 14px; }
.rowbox { width: 916px; position: relative; }
.rowbox::before { content: ""; position: absolute; left: 47px; right: 0; top: 0; bottom: 0; border: 1px dotted #333; }
.rowbox > div { padding-left: 5px; white-space: nowrap; }
.rowbox .c-time { padding-left: 52px; }

/* Write */
.write { height: 65px; flex: none; background: linear-gradient(#fdfdfd, #f5f5f5); display: flex; flex-direction: column; }
.write-head { height: 30px; display: flex; align-items: center; justify-content: space-between; padding: 0 6px 0 5px; font-size: 14.6px; color: #666; }
.write-ctl { display: flex; gap: 9px; align-items: center; }
.wc { width: 12px; height: 13px; }
.write-toolbar { flex: 1; display: flex; align-items: center; padding-bottom: 4px; }
.wi { display: flex; align-items: center; justify-content: center; flex: none; height: 24px; }
.wsep { width: 1px; height: 24px; background: #ccc; margin: 0 4px 0 7px; flex: none; }
.wsep.tight { margin-left: 2px; }

.out-tabs { height: 30px; flex: none; background: #eee; border-top: 2px solid #aaa; border-bottom: 1px solid #999; display: flex; align-items: stretch; padding-left: 10px; font-size: 13px; color: #3a3a3a; position: relative; }
.ot { padding: 0 6px; line-height: 25px; border-right: 1px solid #bbb; height: 27px; }
.ot.active { background: #fff; border: 1px solid #ccc; border-top: 0; border-radius: 0 0 4px 4px; padding: 0 6px; margin-right: 1px; }
.nav-arrows { margin-left: auto; display: flex; gap: 10px; align-items: center; padding-right: 5px; }
.na { width: 0; height: 0; border-top: 5px solid transparent; border-bottom: 5px solid transparent; }
.na.l { border-right: 6px solid #333; }
.na.r { border-left: 6px solid #333; }

.sheets { height: 20px; flex: none; display: flex; padding-left: 33px; font-size: 13.6px; color: #333; line-height: 14px; border-bottom: 1px solid #aaa; }
.sheet { position: relative; border-bottom: 1px solid #ddd; border-right: 1px solid #ddd; border-radius: 0 0 4px 0; height: 19px; }
.sheet::before { content: ""; position: absolute; left: -18px; bottom: -1px; width: 25px; height: 0; border-top: 1px solid #ddd; transform: rotate(45deg); transform-origin: 100% 0; }
.s-tr { width: 43px; }
.s-cf { width: 100px; padding-left: 16px; color: #2b82d8; }
.s-an { width: 79px; padding-left: 22px; }
.s-new { width: 40px; padding-left: 16px; }
.newwin { width: 18px; height: 16px; margin-top: -2px; }
.a2 { padding-right: 7px; gap: 11px; padding-bottom: 4px; }

.status { flex: 1; display: flex; align-items: center; border-bottom: 2px solid #bbb; padding: 1px 0 0 3px; position: relative; }
.st-input { width: 149px; height: 22px; border: 1px solid #aaa; background: #fff; }
.st-sep { width: 1px; height: 24px; background: #888; flex: none; }
.st-sep.a { margin-left: 8px; }
.st-capl { width: 20px; height: 20px; margin-left: 76px; }
.st-sep.b { margin-left: 10px; }
.cyl { width: 14px; height: 16px; margin-left: 11px; }
.edit { width: 20px; height: 16px; margin-left: 10px; }
.syn { width: 18px; height: 18px; margin-left: 14px; }
.st-time { margin-left: auto; display: flex; align-items: center; gap: 11px; padding-right: 40px; font-size: 14px; color: #444; letter-spacing: .5px; }

.mark { position: absolute; border: 3px solid #f01c14; border-radius: 2px; }
.m-tree { left: 74px; top: 363px; width: 166px; height: 47px; }
.m-name { left: 549px; top: 288px; width: 171px; height: 74px; }
.watermark { position: absolute; left: 1769px; top: 993px; font: 17px "Liberation Sans", "Noto Sans CJK SC", sans-serif; color: rgba(110,110,110,.6); white-space: nowrap; }
```
